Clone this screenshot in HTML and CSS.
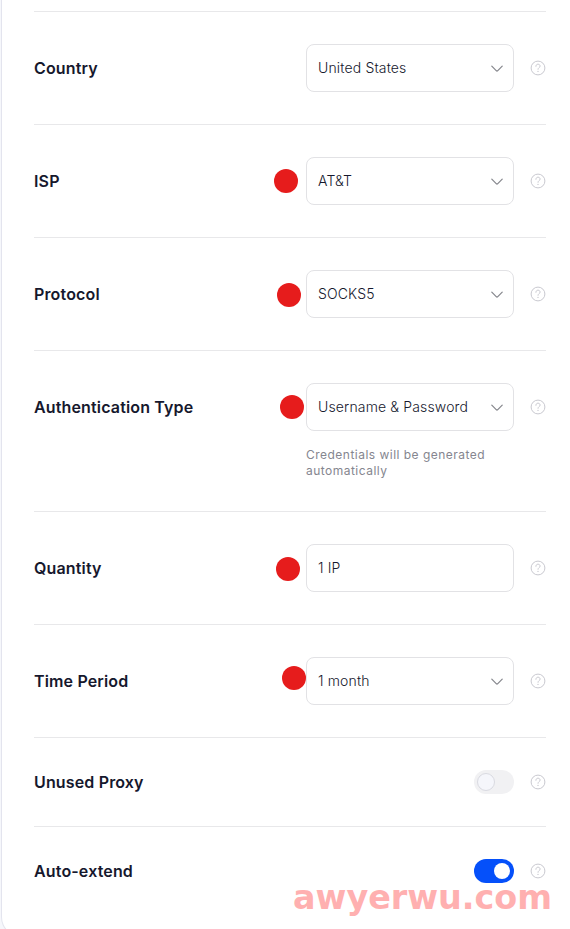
FILE: index.html
```html
<!DOCTYPE html>
<html lang="en">
<head>
    <meta charset="UTF-8">
    <meta name="viewport" content="width=device-width, initial-scale=1.0">
    <title>Proxy order</title>
    <link rel="stylesheet" href="styles.css">
</head>
<body>
    <svg class="sprite" width="0" height="0">
        <symbol id="chevron" viewBox="0 0 12 8">
            <path d="M0.8 1.2L5.2 5.6Q6 6.4 6.8 5.6L11.2 1.2" fill="none" stroke="currentColor" stroke-width="1.2" stroke-linecap="round"/>
        </symbol>
        <symbol id="help" viewBox="0 0 16 16">
            <circle cx="8" cy="8" r="6.9" fill="none" stroke="currentColor" stroke-width="1"/>
            <path d="M5.9 6.3C5.9 5 6.8 4.2 8 4.2S10.1 5 10.1 6.1C10.1 7.5 8 7.6 8 9.3" fill="none" stroke="currentColor" stroke-width="1" stroke-linecap="round"/>
            <circle cx="8" cy="11.4" r="0.7" fill="currentColor"/>
        </symbol>
    </svg>

    <div class="card">
        <div class="row">
            <div class="label">Country</div>
            <div class="field">
                <div class="select">United States<svg class="chevron"><use href="#chevron"/></svg></div>
            </div>
            <svg class="help"><use href="#help"/></svg>
        </div>

        <div class="row">
            <div class="label">ISP</div>
            <div class="field">
                <span class="dot dot-isp"></span>
                <div class="select">AT&amp;T<svg class="chevron"><use href="#chevron"/></svg></div>
            </div>
            <svg class="help"><use href="#help"/></svg>
        </div>

        <div class="row">
            <div class="label">Protocol</div>
            <div class="field">
                <span class="dot dot-protocol"></span>
                <div class="select">SOCKS5<svg class="chevron"><use href="#chevron"/></svg></div>
            </div>
            <svg class="help"><use href="#help"/></svg>
        </div>

        <div class="row">
            <div class="label">Authentication Type</div>
            <div class="field">
                <span class="dot dot-auth"></span>
                <div class="select">Username &amp; Password<svg class="chevron"><use href="#chevron"/></svg></div>
                <div class="hint">Credentials will be generated automatically</div>
            </div>
            <svg class="help"><use href="#help"/></svg>
        </div>

        <div class="row">
            <div class="label">Quantity</div>
            <div class="field">
                <span class="dot dot-quantity"></span>
                <div class="select">1 IP</div>
            </div>
            <svg class="help"><use href="#help"/></svg>
        </div>

        <div class="row">
            <div class="label">Time Period</div>
            <div class="field">
                <span class="dot dot-period"></span>
                <div class="select">1 month<svg class="chevron"><use href="#chevron"/></svg></div>
            </div>
            <svg class="help"><use href="#help"/></svg>
        </div>

        <div class="row row-toggle">
            <div class="label">Unused Proxy</div>
            <div class="toggle"><span class="knob"></span></div>
            <svg class="help"><use href="#help"/></svg>
        </div>

        <div class="row row-toggle">
            <div class="label">Auto-extend</div>
            <div class="toggle on"><span class="knob"></span></div>
            <svg class="help"><use href="#help"/></svg>
        </div>
    </div>

    <div class="watermark">awyerwu.com</div>
</body>
</html>
```

FILE: styles.css
```css
* {
    box-sizing: border-box;
}
body {
    position: relative;
    height: 929px;
    margin: 0;
    padding-left: 1px;
    overflow: hidden;
    font-family: Inter, "Liberation Sans", sans-serif;
    background-color: #f6f7fb;
    color: #16182d;
}
.sprite {
    position: absolute;
}
.card {
    width: 578px;
    height: 937px;
    padding: 11px 32px 0;
    background-color: #fff;
    border: 1px solid #e3e4ee;
    border-top: 0;
    border-radius: 0 0 20px 20px;
}
.row {
    display: flex;
    align-items: flex-start;
    padding: 32px 0;
    border-top: 1px solid #e8e8ea;
}
.label {
    flex: 1;
    font-size: 16px;
    font-weight: 600;
    line-height: 48px;
    letter-spacing: 0.15px;
}
.field {
    position: relative;
    width: 208px;
}
.select {
    display: flex;
    align-items: center;
    justify-content: space-between;
    height: 48px;
    padding: 0 10px 2px 11px;
    border: 1px solid #e2e2e5;
    border-radius: 8px;
    font-size: 14px;
    font-weight: 300;
    letter-spacing: 0.15px;
}
.chevron {
    width: 12px;
    height: 8px;
    margin-top: 4px;
    color: #85868c;
}
.hint {
    margin-top: 16px;
    font-size: 12px;
    line-height: 16px;
    letter-spacing: 0.48px;
    color: #85868f;
}
.help {
    width: 16px;
    height: 16px;
    margin: 16px 0 0 16px;
    color: #c9c9d0;
}

.row-toggle {
    align-items: center;
}
.row-toggle .label {
    line-height: 24px;
}
.row-toggle .help {
    margin-top: 0;
}
.toggle {
    display: flex;
    align-items: center;
    width: 40px;
    height: 24px;
    padding: 0 3px;
    border-radius: 12px;
    background-color: #f1f1f3;
}
.knob {
    width: 18px;
    height: 18px;
    border: 1px solid #d9dae1;
    border-radius: 50%;
    background-color: #f5f6fb;
}
.toggle.on {
    justify-content: flex-end;
    padding-right: 4px;
    background-color: #0550fa;
}
.toggle.on .knob {
    width: 16px;
    height: 16px;
    border: 0;
    background-color: #fff;
}

/* step markers */
.dot {
    position: absolute;
    top: 12px;
    width: 24px;
    height: 24px;
    border-radius: 50%;
    background-color: #e61c1c;
}
.dot-isp { left: -32px; }
.dot-protocol { left: -29px; top: 13px; }
.dot-auth { left: -26px; }
.dot-quantity { left: -30.5px; top: 12.5px; }
.dot-period { left: -24.5px; top: 9px; }

.watermark {
    position: absolute;
    left: 293px;
    top: 876px;
    font-family: "DejaVu Sans", sans-serif;
    font-size: 34px;
    font-weight: bold;
    line-height: 42px;
    white-space: nowrap;
    color: #ffb0b0;
    transform: scaleX(0.982);
    transform-origin: left;
}
```
